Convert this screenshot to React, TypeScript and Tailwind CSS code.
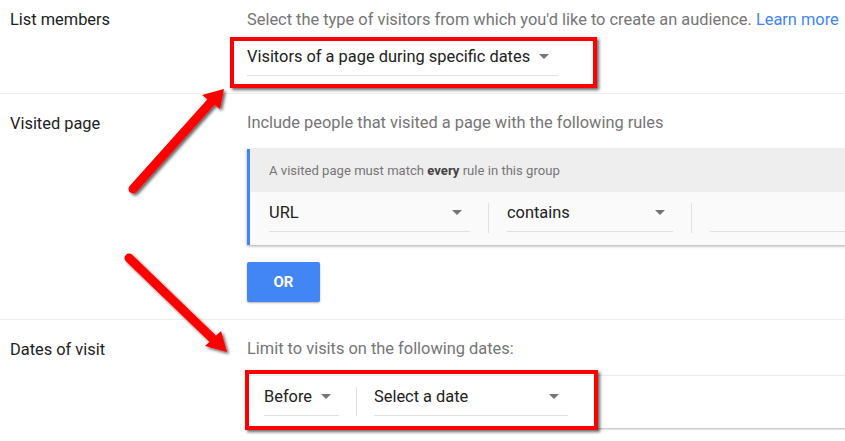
import React from 'react';

function Caret() {
  return (
    <svg width="10" height="5" viewBox="0 0 10 5" className="shrink-0">
      <path d="M0 0 L10 0 L5 5 Z" fill="#757575" />
    </svg>
  );
}

function Select({ label, width, pr = 'pr-[8px]' }: { label: string; width: string; pr?: string }) {
  return (
    <div className={`flex h-[38px] items-center justify-between border-b border-[#e0e0e0] ${width} ${pr}`}>
      <span className="pt-[1px] text-[16.4px] text-[#212121]">{label}</span>
      <Caret />
    </div>
  );
}

function Annotations() {
  return (
    <>
      <div className="pointer-events-none absolute left-[230px] top-[37px] h-[51px] w-[367px] border-4 border-[#ff0000] shadow-[2px_2px_3px_rgba(0,0,0,0.6)]" />
      <div className="pointer-events-none absolute left-[245px] top-[370px] h-[60px] w-[353px] border-4 border-[#ff0000] shadow-[2px_2px_3px_rgba(0,0,0,0.6)]" />
      <svg className="pointer-events-none absolute left-0 top-0" width="845" height="441">
        <defs>
          <filter id="sh" x="-20%" y="-20%" width="140%" height="140%">
            <feDropShadow dx="2" dy="2" stdDeviation="1.5" floodColor="#000" floodOpacity="0.6" />
          </filter>
        </defs>
        <g filter="url(#sh)">
          <line x1="133" y1="189" x2="211" y2="102" stroke="#ff0000" strokeWidth="9" strokeLinecap="round" />
          <path d="M224 89 L202 95 L220 109 Z" fill="#ff0000" />
          <line x1="129" y1="258" x2="212" y2="338" stroke="#ff0000" strokeWidth="9" strokeLinecap="round" />
          <path d="M227 352 L205 346 L221 331 Z" fill="#ff0000" />
        </g>
      </svg>
    </>
  );
}

export default function App() {
  return (
    <div className="relative h-[441px] w-[845px] overflow-hidden bg-white font-['Roboto',sans-serif]">
      {/* List members */}
      <div className="flex h-[94px] border-b border-[#eeeeee]">
        <div className="w-[247px] shrink-0 pl-[10px] pt-[10px] text-[16.4px] leading-[19px] text-[#212121]">List members</div>
        <div className="flex-1 min-w-0 pt-[10px]">
          <p className="whitespace-nowrap text-[16.4px] leading-[19px] text-[#757575]">
            Select the type of visitors from which you'd like to create an audience.{' '}
            <span className="text-[#4285f4]">Learn more</span>
          </p>
          <div className="mt-[9px] flex h-[38px] w-[311px] items-center border-b border-[#e0e0e0]">
            <span className="pt-[1px] text-[16.4px] text-[#212121]">Visitors of a page during specific dates</span>
            <span className="ml-[9px]"><Caret /></span>
          </div>
        </div>
      </div>

      {/* Visited page */}
      <div className="flex h-[226px] border-b border-[#eeeeee]">
        <div className="w-[247px] shrink-0 pl-[10px] pt-[20px] text-[16.4px] leading-[19px] text-[#212121]">Visited page</div>
        <div className="flex-1 min-w-0 pt-[19px]">
          <p className="whitespace-nowrap text-[16.4px] leading-[19px] text-[#757575]">Include people that visited a page with the following rules</p>
          <div className="mt-[17px] w-[640px] border-l-[3px] border-[#4285f4] shadow-[0_1px_3px_rgba(0,0,0,0.35)]">
            <div className="flex h-[43px] items-center bg-[#eeeeee] pl-[19px] text-[13.1px] text-[#757575]">
              A visited page must match&nbsp;<b className="font-bold text-[#424242]">every</b>&nbsp;rule in this group
            </div>
            <div className="flex h-[53px] items-start bg-[#fafafa] pl-[19px] pt-[2px]">
              <Select label="URL" width="w-[201px]" />
              <div className="mx-[18px] mt-[9px] h-[30px] w-px bg-[#e0e0e0]" />
              <Select label="contains" width="w-[166px]" />
              <div className="mx-[18px] mt-[9px] h-[30px] w-px bg-[#e0e0e0]" />
              <div className="h-[38px] flex-1 border-b border-[#e0e0e0]" />
            </div>
          </div>
          <button className="mt-[17px] flex h-[40px] w-[73px] items-center justify-center rounded-[2px] bg-[#4285f4] text-[15px] font-bold text-white shadow-[0_1px_2px_rgba(0,0,0,0.3)]">
            OR
          </button>
        </div>
      </div>

      {/* Dates of visit */}
      <div className="flex">
        <div className="w-[247px] shrink-0 pl-[10px] pt-[20px] text-[16.4px] leading-[19px] text-[#212121]">Dates of visit</div>
        <div className="flex-1 min-w-0 pt-[19px]">
          <p className="whitespace-nowrap text-[16.4px] leading-[19px] text-[#757575]">Limit to visits on the following dates:</p>
          <div className="mt-[17px] flex h-[53px] w-[640px] items-start border-t border-[#eeeeee] bg-white pl-[17px] pt-[2px] shadow-[0_1px_2px_rgba(0,0,0,0.3)]">
            <Select label="Before" width="w-[75px]" pr="pr-[8px]" />
            <div className="mx-[17px] mt-[9px] h-[29px] w-px bg-[#e0e0e0]" />
            <Select label="Select a date" width="w-[194px]" pr="pr-[9px]" />
          </div>
        </div>
      </div>

      <Annotations />
    </div>
  );
}
